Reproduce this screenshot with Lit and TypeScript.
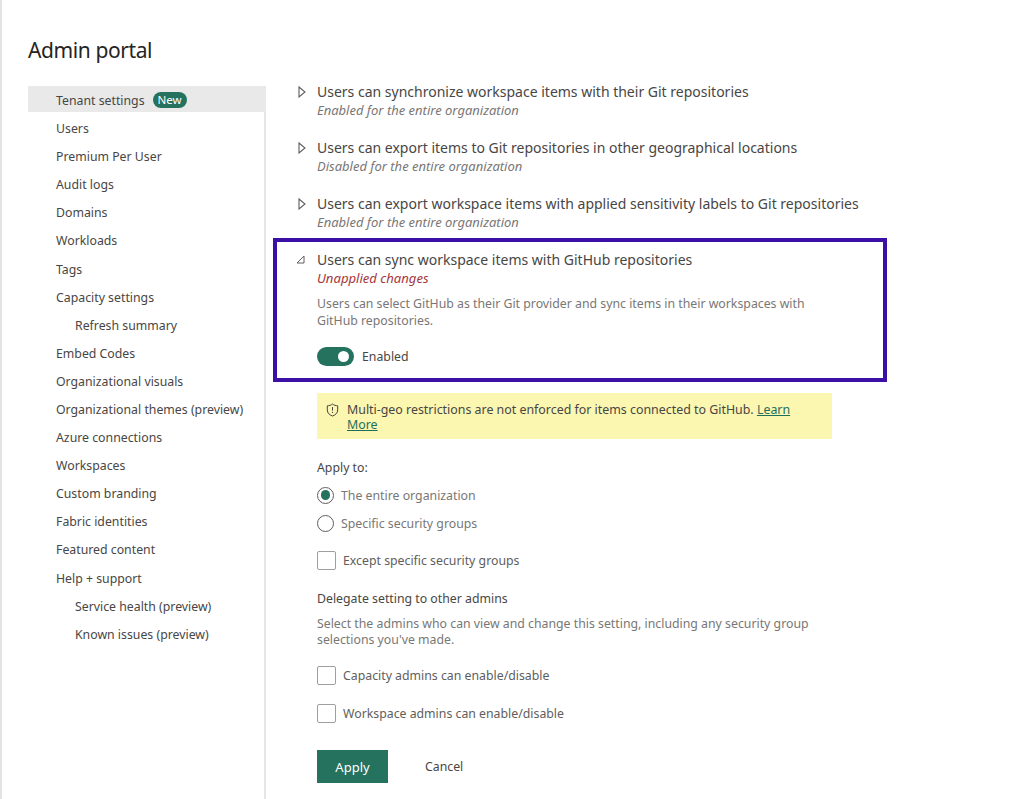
import { LitElement, html, css } from "lit";
import { customElement } from "lit/decorators.js";

const NAV: [string, boolean][] = [
  ["Users", false], ["Premium Per User", false], ["Audit logs", false], ["Domains", false],
  ["Workloads", false], ["Tags", false], ["Capacity settings", false], ["Refresh summary", true],
  ["Embed Codes", false], ["Organizational visuals", false], ["Organizational themes (preview)", false],
  ["Azure connections", false], ["Workspaces", false], ["Custom branding", false], ["Fabric identities", false],
  ["Featured content", false], ["Help + support", false], ["Service health (preview)", true], ["Known issues (preview)", true],
];
const ROWS = [
  ["Users can synchronize workspace items with their Git repositories", "Enabled for the entire organization"],
  ["Users can export items to Git repositories in other geographical locations", "Disabled for the entire organization"],
  ["Users can export workspace items with applied sensitivity labels to Git repositories", "Enabled for the entire organization"],
];

@customElement("app-root")
export class AppRoot extends LitElement {
  static styles = css`
    :host { display: block; height: 799px; overflow: hidden; background: #fff; color: #323130; font-family: "Noto Sans", "Open Sans", sans-serif; font-size: 12.3px; border-left: 2px solid #e3e3e3; box-sizing: border-box; }
    .page { display: grid; grid-template-columns: 264px 1fr; grid-template-rows: 84px 1fr; height: 799px; }
    h1 { grid-column: 1 / 3; margin: 0; padding: 35px 0 0 26px; font-size: 21px; letter-spacing: -0.4px; font-weight: 400; line-height: 30px; color: #252423; }
    .nav { border-right: 2px solid #e6e6e6; margin: 2px 0 0 26px; display: flex; flex-direction: column; }
    .nav-item { height: 28.1px; line-height: 28px; padding-left: 28px; color: #484644; flex: none; display: flex; align-items: center; }
    .nav-item.sub { padding-left: 47px; }
    .nav-item.active { background: #e9e9e9; margin-right: -2px; height: 26px; box-sizing: border-box; padding-top: 3px; margin-bottom: 3px; }
    .badge { background: #25735f; color: #fff; font-size: 11.5px; line-height: 16px; height: 16px; padding: 0 5px; border-radius: 8px; margin-left: 8px; margin-top: -2px; }
    .main { padding-left: 7px; margin-top: -2px; display: flex; flex-direction: column; }
    .row { display: grid; grid-template-columns: 41px 1fr; height: 56px; padding-left: 3px; }
    .chev { display: flex; justify-content: flex-start; padding: 4px 0 0 22px; height: 14px; }
    .title { font-size: 14px; line-height: 19px; color: #484644; white-space: nowrap; }
    .sub-t { font-size: 13px; font-style: italic; color: #797775; line-height: 19px; white-space: nowrap; }
    .box { width: 614px; height: 144px; box-sizing: border-box; border: 4px solid #3c10a6; margin-top: -12px; display: grid; grid-template-columns: 40px 1fr; padding-top: 8px; }
    .box .chev { padding-left: 19px; padding-top: 5px; }
    .unapplied { font-size: 13.1px; font-style: italic; color: #a4373c; line-height: 19px; }
    .desc { margin-top: 7px; color: #797775; line-height: 17px; width: 520px; }
    .toggle-row { display: flex; align-items: center; gap: 8px; margin-top: 17px; height: 20px; color: #484644; }
    .toggle { width: 37px; height: 19px; border-radius: 10px; background: #25735f; position: relative; }
    .toggle::after { content: ""; position: absolute; right: 5px; top: 4px; width: 11px; height: 11px; border-radius: 50%; background: #fff; }
    .form { margin-left: 44px; width: 515px; display: flex; flex-direction: column; }
    .warn { margin-top: 11px; background: #fbf6b0; height: 46px; box-sizing: border-box; padding: 9px 24px 0 9px; display: grid; grid-template-columns: 21px 1fr; font-size: 12.4px; line-height: 15px; color: #484644; }
    .warn svg { margin-top: 1px; }
    .warn a { color: #1f6f5c; text-decoration: underline; }
    .apply { margin-top: 19px; line-height: 19px; color: #484644; }
    .opt { display: flex; align-items: center; height: 28px; color: #797775; gap: 7px; }
    .radios { margin-top: 4px; }
    .radio { width: 17px; height: 17px; box-sizing: border-box; border-radius: 50%; border: 1px solid #605e5c; display: flex; align-items: center; justify-content: center; }
    .radio.on::after { content: ""; width: 9.5px; height: 9.5px; border-radius: 50%; background: #25735f; }
    .check { margin-top: 13px; display: flex; align-items: center; gap: 7px; height: 20px; color: #605e5c; }
    .cb { width: 19px; height: 19px; box-sizing: border-box; border: 1px solid #a19f9d; border-radius: 2px; }
    .delegate { margin-top: 19px; line-height: 19px; color: #484644; }
    .delegate-d { margin-top: 8px; color: #797775; line-height: 16px; }
    .check.mt-a { margin-top: 17px; }
    .check.mt-b { margin-top: 18px; }
    .actions { margin-top: 27px; display: flex; align-items: center; }
    .btn { width: 71px; height: 33px; background: #25735f; color: #fff; border: 0; padding: 0; font: inherit; font-size: 13px; }
    .cancel { background: none; border: 0; padding: 0; margin-left: 37px; font: inherit; color: #484644; }
  `;

  chevR() { return html`<div class="chev"><svg width="8" height="12" viewBox="0 0 8 12"><path d="M1 1 L7 6 L1 11 Z" fill="none" stroke="#605e5c" stroke-width="1.1"/></svg></div>`; }

  render() {
    return html`<div class="page">
      <h1>Admin portal</h1>
      <nav class="nav">
        <div class="nav-item active">Tenant settings<span class="badge">New</span></div>
        ${NAV.map(([t, s]) => html`<div class="nav-item ${s ? "sub" : ""}">${t}</div>`)}
      </nav>
      <main class="main">
        ${ROWS.map(([a, b]) => html`<div class="row">${this.chevR()}<div><div class="title">${a}</div><div class="sub-t">${b}</div></div></div>`)}
        <section class="box">
          <div class="chev"><svg width="9" height="9" viewBox="0 0 9 9"><path d="M8 1 L8 8 L1 8 Z" fill="none" stroke="#605e5c" stroke-width="1"/></svg></div>
          <div>
            <div class="title">Users can sync workspace items with GitHub repositories</div>
            <div class="unapplied">Unapplied changes</div>
            <div class="desc">Users can select GitHub as their Git provider and sync items in their workspaces with GitHub repositories.</div>
            <div class="toggle-row"><span class="toggle"></span>Enabled</div>
          </div>
        </section>
        <div class="form">
          <div class="warn">
            <svg width="13" height="14" viewBox="0 0 13 14"><path d="M6.5 1 C8 2.2 10 2.8 11.7 2.8 V7 C11.7 10 9.5 12 6.5 13 C3.5 12 1.3 10 1.3 7 V2.8 C3 2.8 5 2.2 6.5 1 Z" fill="none" stroke="#484644" stroke-width="1"/><path d="M6.5 4 V7.6 M6.5 8.8 V10" stroke="#484644" stroke-width="1"/></svg>
            <div>Multi-geo restrictions are not enforced for items connected to GitHub. <a>Learn</a> <a>More</a></div>
          </div>
          <div class="apply">Apply to:</div>
          <div class="radios">
            <div class="opt"><span class="radio on"></span>The entire organization</div>
            <div class="opt"><span class="radio"></span>Specific security groups</div>
          </div>
          <div class="check"><span class="cb"></span>Except specific security groups</div>
          <div class="delegate">Delegate setting to other admins</div>
          <div class="delegate-d">Select the admins who can view and change this setting, including any security group selections you've made.</div>
          <div class="check mt-a"><span class="cb"></span>Capacity admins can enable/disable</div>
          <div class="check mt-b"><span class="cb"></span>Workspace admins can enable/disable</div>
          <div class="actions"><button class="btn">Apply</button><button class="cancel">Cancel</button></div>
        </div>
      </main>
    </div>`;
  }
}
